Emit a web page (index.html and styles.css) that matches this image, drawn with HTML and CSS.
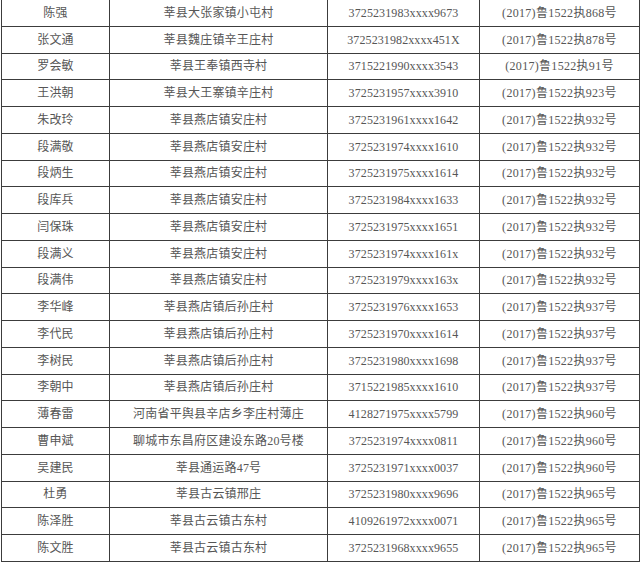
FILE: index.html
```html
<!DOCTYPE html>
<html lang="zh">
<head>
<meta charset="utf-8">
<title>名单</title>
<link rel="stylesheet" href="styles.css">
</head>
<body>
<table class="list">
<colgroup><col class="c-name"><col class="c-addr"><col class="c-id"><col class="c-case"></colgroup>
<tbody>
<tr><td>陈强</td><td>莘县大张家镇小屯村</td><td class="num">3725231983xxxx9673</td><td class="case">(2017)鲁1522执868号</td></tr>
<tr><td>张文通</td><td>莘县魏庄镇辛王庄村</td><td class="num">3725231982xxxx451X</td><td class="case">(2017)鲁1522执878号</td></tr>
<tr><td>罗会敏</td><td>莘县王奉镇西寺村</td><td class="num">3715221990xxxx3543</td><td class="case">(2017)鲁1522执91号</td></tr>
<tr><td>王洪朝</td><td>莘县大王寨镇辛庄村</td><td class="num">3725231957xxxx3910</td><td class="case">(2017)鲁1522执923号</td></tr>
<tr><td>朱改玲</td><td>莘县燕店镇安庄村</td><td class="num">3725231961xxxx1642</td><td class="case">(2017)鲁1522执932号</td></tr>
<tr><td>段满敬</td><td>莘县燕店镇安庄村</td><td class="num">3725231974xxxx1610</td><td class="case">(2017)鲁1522执932号</td></tr>
<tr><td>段炳生</td><td>莘县燕店镇安庄村</td><td class="num">3725231975xxxx1614</td><td class="case">(2017)鲁1522执932号</td></tr>
<tr><td>段库兵</td><td>莘县燕店镇安庄村</td><td class="num">3725231984xxxx1633</td><td class="case">(2017)鲁1522执932号</td></tr>
<tr><td>闫保珠</td><td>莘县燕店镇安庄村</td><td class="num">3725231975xxxx1651</td><td class="case">(2017)鲁1522执932号</td></tr>
<tr><td>段满义</td><td>莘县燕店镇安庄村</td><td class="num">3725231974xxxx161x</td><td class="case">(2017)鲁1522执932号</td></tr>
<tr><td>段满伟</td><td>莘县燕店镇安庄村</td><td class="num">3725231979xxxx163x</td><td class="case">(2017)鲁1522执932号</td></tr>
<tr><td>李华峰</td><td>莘县燕店镇后孙庄村</td><td class="num">3725231976xxxx1653</td><td class="case">(2017)鲁1522执937号</td></tr>
<tr><td>李代民</td><td>莘县燕店镇后孙庄村</td><td class="num">3725231970xxxx1614</td><td class="case">(2017)鲁1522执937号</td></tr>
<tr><td>李树民</td><td>莘县燕店镇后孙庄村</td><td class="num">3725231980xxxx1698</td><td class="case">(2017)鲁1522执937号</td></tr>
<tr><td>李朝中</td><td>莘县燕店镇后孙庄村</td><td class="num">3715221985xxxx1610</td><td class="case">(2017)鲁1522执937号</td></tr>
<tr><td>薄春雷</td><td>河南省平舆县辛店乡李庄村薄庄</td><td class="num">4128271975xxxx5799</td><td class="case">(2017)鲁1522执960号</td></tr>
<tr><td>曹申斌</td><td>聊城市东昌府区建设东路20号楼</td><td class="num">3725231974xxxx0811</td><td class="case">(2017)鲁1522执960号</td></tr>
<tr><td>吴建民</td><td>莘县通运路47号</td><td class="num">3725231971xxxx0037</td><td class="case">(2017)鲁1522执960号</td></tr>
<tr><td>杜勇</td><td>莘县古云镇邢庄</td><td class="num">3725231980xxxx9696</td><td class="case">(2017)鲁1522执965号</td></tr>
<tr><td>陈泽胜</td><td>莘县古云镇古东村</td><td class="num">4109261972xxxx0071</td><td class="case">(2017)鲁1522执965号</td></tr>
<tr><td>陈文胜</td><td>莘县古云镇古东村</td><td class="num">3725231968xxxx9655</td><td class="case">(2017)鲁1522执965号</td></tr>
</tbody>
</table>
</body>
</html>
```
FILE: styles.css
```css
html, body {
  margin: 0;
  padding: 0;
  background: #ffffff;
}
body {
  padding-left: 1px;
  overflow: hidden;
}
.list {
  border-collapse: collapse;
  table-layout: fixed;
  width: 638px;
  margin-top: -1px;
  font-family: "Liberation Serif", "Noto Sans CJK SC", serif;
  font-size: 12px;
  color: #565656;
}
.c-name { width: 108px; }
.c-addr { width: 218px; }
.c-id { width: 152px; }
.c-case { width: 160px; }
.list tr {
  height: 26.75px;
}
.list td {
  border: 1px solid #3c3c3c;
  padding: 0;
  text-align: center;
  vertical-align: middle;
  white-space: nowrap;
  line-height: 14px;
  letter-spacing: 0.2px;
}
.list td.num {
  letter-spacing: 0.1px;
}
.list td.case {
  letter-spacing: 0.3px;
}
```
